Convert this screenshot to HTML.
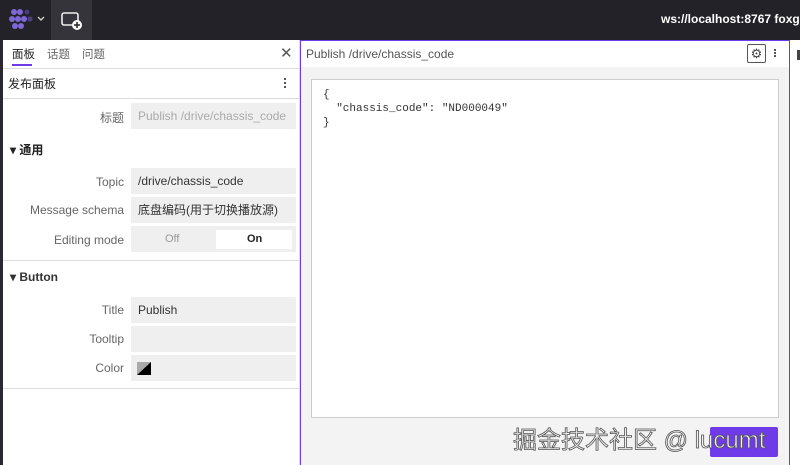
<!DOCTYPE html>
<html><head><meta charset="utf-8"><style>
*{margin:0;padding:0;box-sizing:border-box}
body{width:800px;height:465px;overflow:hidden;background:#fff;font-family:"Liberation Sans","Noto Sans CJK SC",sans-serif;font-size:12px;color:#333;position:relative}
.a{position:absolute}
.top{left:0;top:0;width:800px;height:40px;background:#232228}
.lbl{position:absolute;right:676px;color:#666;font-size:12px;text-align:right;white-space:nowrap}
.fld{position:absolute;left:131px;width:165px;background:#efefef;color:#333;font-size:12px;padding-left:7px;line-height:26px;height:26px;white-space:nowrap;overflow:hidden}
</style></head><body>
<div class="a top"></div>
<svg class="a" style="left:8px;top:9px" width="42" height="22">
<g fill="#7d68d6"><circle cx="6" cy="3" r="3"/><circle cx="12" cy="3" r="3"/><circle cx="4" cy="10" r="3"/><circle cx="10" cy="10" r="3"/><circle cx="16" cy="10" r="3"/><circle cx="7" cy="17" r="3"/><circle cx="13" cy="17" r="3"/></g>
<circle cx="22" cy="10" r="2.6" fill="#4a3f7a"/><circle cx="19" cy="3" r="2.4" fill="#4a3f7a"/>
<path d="M30 8l3 3 3-3" stroke="#ccc" stroke-width="1.4" fill="none"/></svg>
<div class="a" style="left:51px;top:0;width:41px;height:40px;background:#35343a"></div>
<svg class="a" style="left:60px;top:10px" width="24" height="22"><rect x="2" y="3" width="16" height="12" rx="2" stroke="#eee" stroke-width="1.6" fill="none"/><circle cx="17" cy="15" r="5" fill="#fff"/><path d="M17 12v6M14 15h6" stroke="#222" stroke-width="1.5"/></svg>
<div class="a" style="left:661px;top:12px;color:#fff;font-size:12px;font-weight:bold;white-space:nowrap">ws://localhost:8767 foxglo</div>
<div class="a" style="left:0;top:40px;width:3px;height:425px;background:#2a2930"></div>
<div class="a" style="left:3px;top:40px;width:297px;height:425px;border-right:1px solid #ddd"></div>
<div class="a" style="left:12px;top:46px;font-size:11.5px;color:#222">面板</div>
<div class="a" style="left:12px;top:64px;width:20px;height:2px;background:#6f3be8"></div>
<div class="a" style="left:47px;top:46px;font-size:11.5px;color:#666">话题</div>
<div class="a" style="left:82px;top:46px;font-size:11.5px;color:#666">问题</div>
<div class="a" style="left:280px;top:44px;font-size:15px;color:#555">✕</div>
<div class="a" style="left:3px;top:68px;width:297px;height:1px;background:#ddd"></div>
<div class="a" style="left:8px;top:75px;font-size:12px;color:#222">发布面板</div>
<div class="a" style="left:284px;top:78px;width:2px;height:2px;background:#555;box-shadow:0 4px #555,0 8px #555"></div>
<div class="a" style="left:3px;top:98px;width:297px;height:1px;background:#ddd"></div>
<div class="lbl" style="top:109px;right:676px">标题</div>
<div class="fld" style="top:103px;color:#aaa">Publish /drive/chassis_code</div>
<div class="a" style="left:10px;top:141px;font-size:12px;font-weight:bold;color:#222">▾ 通用</div>
<div class="lbl" style="top:175px">Topic</div>
<div class="fld" style="top:168px">/drive/chassis_code</div>
<div class="lbl" style="top:203px">Message schema</div>
<div class="fld" style="top:197px">底盘编码(用于切换播放源)</div>
<div class="lbl" style="top:233px">Editing mode</div>
<div class="fld" style="top:226px"></div>
<div class="a" style="left:165px;top:233px;color:#999;font-size:11px">Off</div>
<div class="a" style="left:216px;top:230px;width:76px;height:19px;background:#fff"></div>
<div class="a" style="left:247px;top:233px;color:#222;font-size:11px;font-weight:bold">On</div>
<div class="a" style="left:3px;top:260px;width:297px;height:1px;background:#ddd"></div>
<div class="a" style="left:10px;top:270px;font-size:12px;font-weight:bold;color:#333">▾ Button</div>
<div class="lbl" style="top:303px">Title</div>
<div class="fld" style="top:297px">Publish</div>
<div class="lbl" style="top:332px">Tooltip</div>
<div class="fld" style="top:326px"></div>
<div class="lbl" style="top:361px">Color</div>
<div class="fld" style="top:355px"></div>
<svg class="a" style="left:137px;top:362px" width="14" height="13"><rect width="14" height="13" fill="#aaa"/><path d="M14 0V13H0Z" fill="#000"/></svg>
<div class="a" style="left:3px;top:388px;width:297px;height:1px;background:#ddd"></div>
<div class="a" style="left:300px;top:40px;width:490px;height:425px;border:1px solid #6f3be8;border-bottom:none;background:#f3f3f3"></div>
<div class="a" style="left:301px;top:41px;width:488px;height:26px;background:#fff"></div>
<div class="a" style="left:306px;top:47px;color:#555;font-size:12px">Publish /drive/chassis_code</div>
<div class="a" style="left:747px;top:44px;width:19px;height:19px;border:1px solid #555;border-radius:2px;text-align:center;line-height:17px;font-size:13px;color:#444">⚙</div>
<div class="a" style="left:774px;top:49px;width:2px;height:2px;background:#555;box-shadow:0 3px #555,0 6px #555"></div>
<div class="a" style="left:311px;top:79px;width:468px;height:339px;background:#fff;border:1px solid #ccc"></div>
<pre class="a" style="left:323px;top:88px;font-family:'Liberation Mono',monospace;font-size:11px;line-height:14px;color:#333">{
  "chassis_code": "ND000049"
}</pre>
<div class="a" style="left:710px;top:427px;width:68px;height:30px;background:#6f3be8;border-radius:2px"></div>
<div class="a" style="left:513px;top:420px;font-size:24px;color:#f0f0f0;-webkit-text-stroke:0.8px #555;white-space:nowrap">掘金技术社区 @ lucumt</div>
<div class="a" style="left:790px;top:40px;width:10px;height:425px;background:#fff"></div>
<div class="a" style="left:797px;top:50px;width:3px;height:10px;background:#444"></div>
</body></html>
